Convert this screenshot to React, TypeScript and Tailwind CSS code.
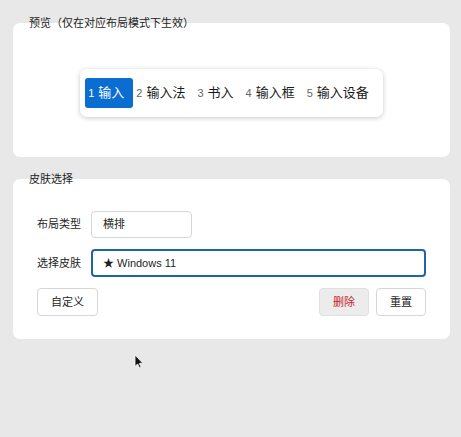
import React from "react";

const font = {
  fontFamily: '"Liberation Sans", "Noto Sans CJK SC", sans-serif',
};

const tabs = [
  { num: "1", label: "输入" },
  { num: "2", label: "输入法" },
  { num: "3", label: "书入" },
  { num: "4", label: "输入框" },
  { num: "5", label: "输入设备" },
];

function PreviewBar() {
  return (
    <div className="inline-flex h-[48px] items-center rounded-[7px] bg-white px-[5px] shadow-[0_1px_5px_rgba(0,0,0,0.22)]">
      {tabs.map((tab, i) => {
        const active = i === 0;
        return (
          <div
            key={tab.num}
            className={
              active
                ? "flex h-[30px] items-center rounded-[3px] bg-[#0a6dd1] pl-[3px] pr-[9px] text-white"
                : "flex h-[30px] items-center pl-[3px] pr-[9px] text-[#1a1a1a]"
            }
          >
            <span
              className={
                active
                  ? "text-[11px] text-white"
                  : "text-[11px] text-[#666666]"
              }
            >
              {tab.num}
            </span>
            <span className="ml-[4px] text-[13px]">{tab.label}</span>
          </div>
        );
      })}
    </div>
  );
}

export default function App() {
  return (
    <div
      className="relative min-h-screen bg-[#e8e8e8] pl-[13px] pr-[11px] pt-[16px] text-[#1e1e1e]"
      style={font}
    >
      {/* Preview */}
      <fieldset className="rounded-[7px] bg-white">
        <legend className="ml-[12px] px-[4px] text-[11px] leading-[14px]">
          预览（仅在对应布局模式下生效）
        </legend>
        <div className="flex justify-center pb-[40px] pt-[39px]">
          <PreviewBar />
        </div>
      </fieldset>

      {/* Skin selection */}
      <fieldset className="mt-[15px] rounded-[7px] bg-white">
        <legend className="ml-[12px] px-[4px] text-[11px] leading-[14px]">
          皮肤选择
        </legend>
        <div className="flex flex-col gap-[11px] px-[24px] pb-[23px] pt-[25px] text-[11px]">
          <div className="flex items-center">
            <span className="w-[54px]">布局类型</span>
            <div className="flex h-[27px] w-[101px] items-center rounded-[4px] border border-[#d6d6d6] bg-white pl-[11px]">
              横排
            </div>
          </div>
          <div className="flex items-center">
            <span className="w-[54px]">选择皮肤</span>
            <div className="flex h-[28px] flex-1 items-center rounded-[4px] border-2 border-[#1f62ad] bg-white pl-[10px]">
              ★ Windows 11
            </div>
          </div>
          <div className="flex items-center">
            <button className="h-[28px] w-[61px] rounded-[4px] border border-[#d6d6d6] bg-white">
              自定义
            </button>
            <div className="ml-auto flex gap-[7px]">
              <button className="h-[28px] w-[50px] rounded-[4px] border border-[#e0e0e0] bg-[#ececec] text-[#c62828]">
                删除
              </button>
              <button className="h-[28px] w-[50px] rounded-[4px] border border-[#d6d6d6] bg-white">
                重置
              </button>
            </div>
          </div>
        </div>
      </fieldset>

      {/* mouse pointer */}
      <svg
        className="absolute left-[134px] top-[354px]"
        width="10"
        height="15"
        viewBox="0 0 10 15"
      >
        <path
          d="M1 1 L1 12.5 L3.6 10 L5.6 14 L7.2 13.2 L5.3 9.4 L8.8 9.2 Z"
          fill="#111"
          stroke="#fff"
          strokeWidth="0.8"
        />
      </svg>
    </div>
  );
}
